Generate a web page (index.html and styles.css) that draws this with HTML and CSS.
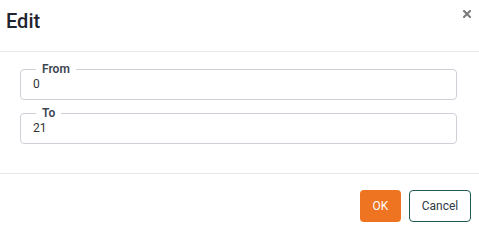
FILE: index.html
```html
<!DOCTYPE html>
<html lang="en">
<head>
    <meta charset="UTF-8">
    <meta name="viewport" content="width=device-width, initial-scale=1.0">
    <title>Edit</title>
    <link rel="stylesheet" href="styles.css">
</head>
<body>
    <div class="dialog">
        <div class="dialog-header">
            <h2 class="dialog-title">Edit</h2>
            <button class="close-btn" aria-label="Close">
                <svg width="8" height="8" viewBox="0 0 8 8">
                    <path d="M1 1 L7 7 M7 1 L1 7" stroke="#7a7a7a" stroke-width="2" stroke-linecap="square"/>
                </svg>
            </button>
        </div>
        <div class="dialog-body">
            <fieldset class="field">
                <legend>From</legend>
                <div class="field-value">0</div>
            </fieldset>
            <fieldset class="field">
                <legend>To</legend>
                <div class="field-value">21</div>
            </fieldset>
        </div>
        <div class="dialog-footer">
            <button class="btn btn-ok">OK</button>
            <button class="btn btn-cancel">Cancel</button>
        </div>
    </div>
</body>
</html>
```

FILE: styles.css
```css
body {
    margin: 0;
    background-color: #ffffff;
    font-family: Roboto, "Liberation Sans", sans-serif;
    color: #333;
}
.dialog {
    width: 479px;
    height: 226px;
    display: flex;
    flex-direction: column;
}
.dialog-header {
    height: 51px;
    border-bottom: 1px solid #e6e8ec;
    display: flex;
    justify-content: space-between;
    align-items: flex-start;
}
.dialog-title {
    margin: 0;
    padding: 9px 0 0 6px;
    font-size: 20px;
    font-weight: 500;
    line-height: 24px;
    color: #1f2530;
}
.close-btn {
    border: none;
    background: none;
    padding: 0;
    margin: 10px 8px 0 0;
    width: 8px;
    height: 8px;
    display: flex;
}
.dialog-body {
    padding: 10px 22px 0 20px;
    height: 111px;
    border-bottom: 1px solid #e6e6e6;
}
.field {
    margin: 0 0 6px 0;
    padding: 0 12px 7px;
    border: 1px solid #cdd0d6;
    border-radius: 4px;
}
.field legend {
    margin-left: 3px;
    padding: 0 6px;
    font-size: 12px;
    line-height: 14px;
    font-weight: 600;
    color: #3d4653;
}
.field-value {
    font-size: 12px;
    line-height: 16px;
    color: #333;
}
.dialog-footer {
    display: flex;
    justify-content: flex-end;
    gap: 8px;
    padding: 16px 8px 0 0;
}
.btn {
    height: 32px;
    border-radius: 4px;
    font-family: Roboto, "Liberation Sans", sans-serif;
    font-size: 12px;
    padding: 0;
}
.btn-ok {
    width: 41px;
    background-color: #ee7421;
    border: none;
    color: #ffffff;
}
.btn-cancel {
    width: 62px;
    background-color: #ffffff;
    border: 1px solid #1f5c55;
    color: #2f3a45;
}
```
